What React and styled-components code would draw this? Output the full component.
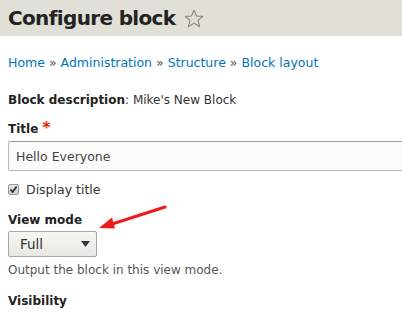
import React from 'react'
import styled, { createGlobalStyle } from 'styled-components'

const Global = createGlobalStyle`
  html, body { margin: 0; padding: 0; background: #fff; }
  body {
    font-family: "DejaVu Sans", "Liberation Sans", sans-serif;
    color: #333;
    width: 402px;
    height: 312px;
    overflow: hidden;
  }
`

const Page = styled.div`
  position: relative;
  width: 402px;
  height: 312px;
  overflow: hidden;
`

const Header = styled.header`
  height: 36px;
  background: #e0e0d8;
  display: flex;
  align-items: center;
  padding-left: 8px;
  gap: 9px;
`

const PageTitle = styled.h1`
  margin: 0;
  font-size: 20px;
  font-weight: 700;
  color: #232323;
  letter-spacing: -0.65px;
`

const Crumbs = styled.nav`
  margin: 18px 0 0 8px;
  font-size: 12.5px;
  line-height: 18px;
  color: #0074bd;
  a { color: #0074bd; text-decoration: none; }
  span { color: #555; margin: 0 4px; }
`

const Form = styled.div`
  padding: 0 8px;
`

const Description = styled.div`
  margin-top: 20px;
  font-size: 12px;
  line-height: 16px;
  b { color: #222; }
`

const Label = styled.div`
  font-size: 12px;
  font-weight: 700;
  color: #222;
  line-height: 16px;
  margin-top: ${p => p.top}px;
  em { color: #e62600; font-style: normal; font-size: 16px; margin-left: 4px; }
`

const TextInput = styled.div`
  margin-top: 4px;
  height: 30px;
  width: 420px;
  box-sizing: border-box;
  border: 1px solid #b8b8b8;
  border-top-color: #999;
  border-radius: 2px;
  background: #fcfcfa;
  display: flex;
  align-items: center;
  padding-left: 7px;
  font-size: 12.5px;
  color: #444;
`

const CheckRow = styled.label`
  display: flex;
  align-items: center;
  gap: 7px;
  margin-top: 11px;
  font-size: 12.5px;
  color: #333;
`

const Box = styled.span`
  width: 11px;
  height: 11px;
  box-sizing: border-box;
  border: 1px solid #999;
  border-radius: 2px;
  background: linear-gradient(#e6e6e6, #cfcfcf);
  display: flex;
  align-items: center;
  justify-content: center;
`

const Select = styled.div`
  margin-top: 3px;
  width: 89px;
  height: 26px;
  box-sizing: border-box;
  border: 1px solid #a6a6a6;
  border-radius: 2px;
  background: linear-gradient(#f6f6f3, #e8e8e3);
  display: flex;
  align-items: center;
  justify-content: space-between;
  padding: 0 6px 0 11px;
  font-size: 13.5px;
  color: #333;
`

const Help = styled.div`
  margin-top: 6px;
  font-size: 12px;
  color: #555;
`

const Arrow = styled.svg`
  position: absolute;
  left: 95px;
  top: 200px;
`

export default function App() {
  return (
    <Page>
      <Global />
      <Header>
        <PageTitle>Configure block</PageTitle>
        <svg width="20" height="19" viewBox="0 0 20 19">
          <path d="M10 1.2 L12.6 7 L18.8 7.4 L14 11.4 L15.6 17.6 L10 14.2 L4.4 17.6 L6 11.4 L1.2 7.4 L7.4 7 Z"
            fill="none" stroke="#858580" strokeWidth="1.1" strokeLinejoin="round" />
        </svg>
      </Header>
      <Crumbs>
        <a>Home</a><span>»</span><a>Administration</a><span>»</span><a>Structure</a><span>»</span><a>Block layout</a>
      </Crumbs>
      <Form>
        <Description><b>Block description</b>: Mike's New Block</Description>
        <Label top={12}>Title<em>*</em></Label>
        <TextInput>Hello Everyone</TextInput>
        <CheckRow>
          <Box>
            <svg width="9" height="9" viewBox="0 0 9 9">
              <path d="M1.5 4.5 L3.6 7 L7.6 1.5" fill="none" stroke="#333" strokeWidth="1.8" />
            </svg>
          </Box>
          Display title
        </CheckRow>
        <Label top={15}>View mode</Label>
        <Select>
          <span>Full</span>
          <svg width="9" height="6" viewBox="0 0 9 6"><path d="M0 0 H9 L4.5 6 Z" fill="#333" /></svg>
        </Select>
        <Help>Output the block in this view mode.</Help>
        <Label top={16}>Visibility</Label>
      </Form>
      <Arrow width="75" height="32" viewBox="0 0 75 32">
        <path d="M70 7 L14 25" stroke="#ee1b1b" strokeWidth="3" strokeLinecap="round" />
        <path d="M4 28 L17 17.5 L20 28.5 Z" fill="#ee1b1b" />
      </Arrow>
    </Page>
  )
}
